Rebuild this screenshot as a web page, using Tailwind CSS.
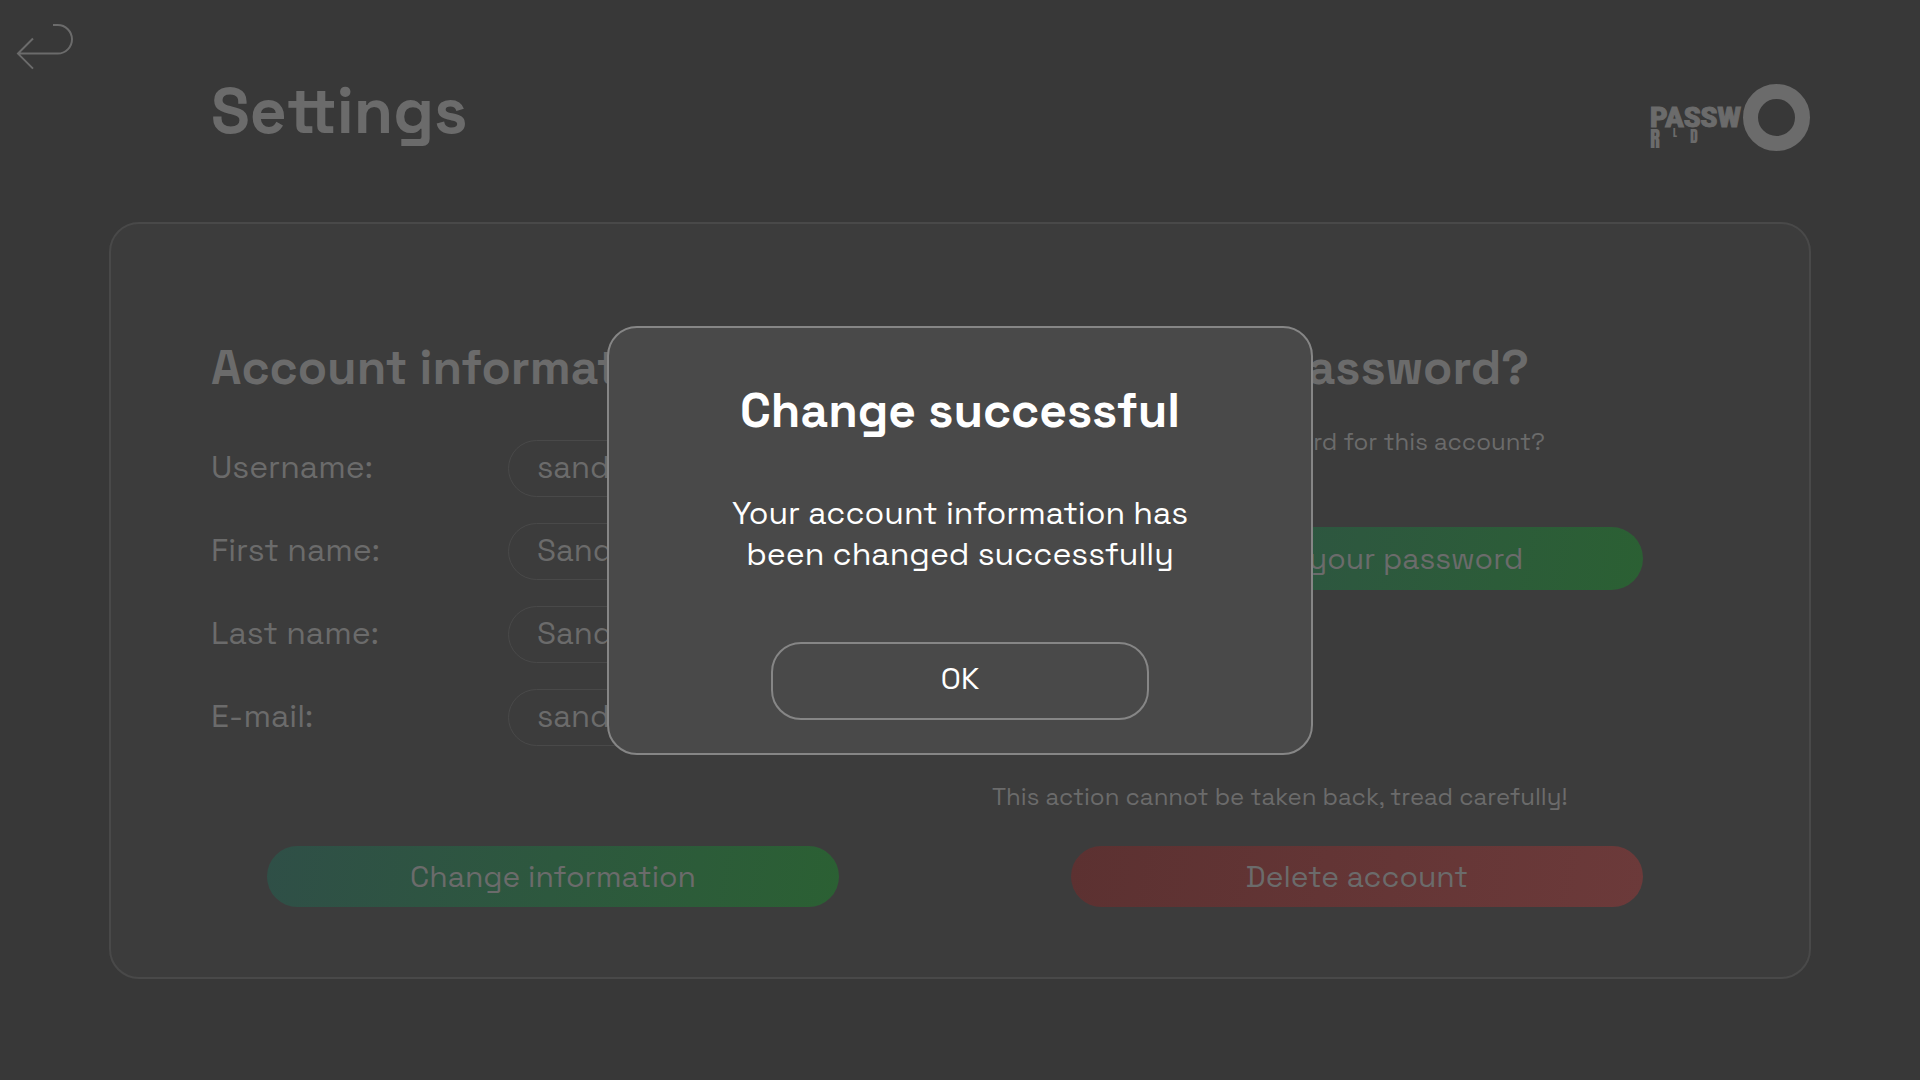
<!DOCTYPE html>
<html lang="en">
<head>
<meta charset="utf-8">
<title>Settings</title>
<script src="https://cdn.jsdelivr.net/npm/@tailwindcss/browser@4"></script>
</head>
<body class="min-h-screen bg-[#383838] pb-[100px] font-['Space_Grotesk','Inter',sans-serif] text-[#6b6b6b]">
  <header class="flex items-start pt-[22px] pr-[109px] pl-4">
    <a href="#" aria-label="Back" class="block">
      <svg class="h-12 w-[58px]" viewBox="0 0 58 48" fill="none" stroke="currentColor" stroke-width="2"><path d="M37 3h4.700a14.300 14.300 0 0 1 0 28.600H2M17 16.500L2 31.600l15 15"/></svg>
    </a>
    <h1 class="mt-[49px] ml-[137px] text-[64px] leading-[80px] font-semibold">Settings</h1>
    <svg class="mt-[60px] ml-auto h-[72px] w-[162px]" viewBox="0 0 162 72" fill="currentColor" stroke="currentColor" role="img" aria-label="Passworld">
      <text x="1" y="45" font-family="Roboto,sans-serif" font-weight="900" font-size="27" stroke-width="1">PASSW</text>
      <g font-family="Anton,Roboto,sans-serif" stroke="none">
        <text x="1" y="66" font-size="21">R</text>
        <text x="24" y="55" font-size="10">L</text>
        <text x="41" y="61" font-size="16">D</text>
      </g>
      <circle cx="127.500" cy="35.500" r="26" fill="none" stroke-width="15"/>
    </svg>
  </header>

  <main class="mx-[109px] mt-[68px] grid grid-cols-2 rounded-[30px] border-2 border-[#494949] bg-[#3c3c3c] pt-[114px] pb-[70px]">
    <form class="pl-[100px]">
      <h2 class="text-5xl leading-[60px] font-semibold whitespace-nowrap">Account information</h2>
      <div class="mt-[42px] grid grid-cols-[297px_400px] gap-y-[26px] text-[32px]">
        <label for="username" class="self-center pb-1">Username:</label>
        <input id="username" value="sandersson" class="h-[57px] rounded-full border border-[#494949] pb-1 pl-7 text-[31px]">
        <label for="first" class="self-center pb-1">First name:</label>
        <input id="first" value="Sander" class="h-[57px] rounded-full border border-[#494949] pb-1 pl-7 text-[31px]">
        <label for="last" class="self-center pb-1">Last name:</label>
        <input id="last" value="Sandersson" class="h-[57px] rounded-full border border-[#494949] pb-1 pl-7 text-[31px]">
        <label for="email" class="self-center pb-1">E-mail:</label>
        <input id="email" type="email" value="sander@mail.com" class="h-[57px] rounded-full border border-[#494949] pb-1 pl-7 text-[31px]">
      </div>
      <button type="button" class="mt-[100px] ml-14 h-[61px] w-[572px] rounded-full bg-linear-100 from-[#2f4f47] via-[#2d583e] to-[#2b6033] text-[30px]">Change information</button>
    </form>

    <section class="pl-8">
      <h2 class="flex w-[537px] justify-end text-5xl leading-[60px] font-semibold whitespace-nowrap">Forgot your password?</h2>
      <p class="mt-7 flex w-[553px] justify-end text-2xl leading-8 whitespace-nowrap">Want to change the password for this account?</p>
      <button type="button" class="mt-[69px] ml-[79px] block h-[63px] w-[572px] rounded-full bg-linear-100 from-[#2f4f47] via-[#2d583e] to-[#2b6033] text-[30px]">Change your password</button>
      <p class="mt-[191px] text-2xl leading-8 whitespace-nowrap">This action cannot be taken back, tread carefully!</p>
      <button type="button" class="mt-[33px] ml-[79px] block h-[61px] w-[572px] rounded-full bg-linear-100 from-[#5c3131] to-[#6c3a3a] text-[30px]">Delete account</button>
    </section>
  </main>

  <div class="fixed inset-0 flex items-center justify-center">
    <div role="dialog" aria-modal="true" aria-labelledby="dialog-title" class="flex w-[706px] flex-col items-center rounded-[30px] border-2 border-[#868686] bg-[#494949] pt-[53px] pb-[33px] text-center text-white">
      <h2 id="dialog-title" class="text-5xl leading-[60px] font-semibold">Change successful</h2>
      <p class="mt-[52px] text-[32px] leading-[41px]">Your account information has<br>been changed successfully</p>
      <button type="button" class="mt-[67px] h-[78px] w-[378px] rounded-[30px] border-2 border-[#868686] pb-1 text-[30px]">OK</button>
    </div>
  </div>
</body>
</html>
